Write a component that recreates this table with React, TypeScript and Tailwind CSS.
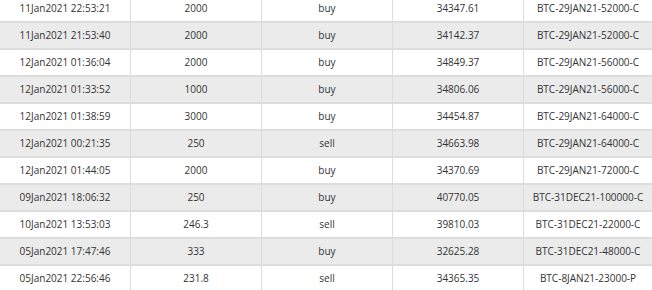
const ROWS = [
  ['11Jan2021 22:53:21', '2000', 'buy', '34347.61', 'BTC-29JAN21-52000-C'],
  ['11Jan2021 21:53:40', '2000', 'buy', '34142.37', 'BTC-29JAN21-52000-C'],
  ['12Jan2021 01:36:04', '2000', 'buy', '34849.37', 'BTC-29JAN21-56000-C'],
  ['12Jan2021 01:33:52', '1000', 'buy', '34806.06', 'BTC-29JAN21-56000-C'],
  ['12Jan2021 01:38:59', '3000', 'buy', '34454.87', 'BTC-29JAN21-64000-C'],
  ['12Jan2021 00:21:35', '250', 'sell', '34663.98', 'BTC-29JAN21-64000-C'],
  ['12Jan2021 01:44:05', '2000', 'buy', '34370.69', 'BTC-29JAN21-72000-C'],
  ['09Jan2021 18:06:32', '250', 'buy', '40770.05', 'BTC-31DEC21-100000-C'],
  ['10Jan2021 13:53:03', '246.3', 'sell', '39810.03', 'BTC-31DEC21-22000-C'],
  ['05Jan2021 17:47:46', '333', 'buy', '32625.28', 'BTC-31DEC21-48000-C'],
  ['05Jan2021 22:56:46', '231.8', 'sell', '34365.35', 'BTC-8JAN21-23000-P'],
];

export default function App() {
  return (
    <div className="w-[652px] h-[290px] overflow-hidden bg-white font-['Open_Sans',sans-serif] text-[10px] text-[#333]">
      <div className="-mt-[4px]">
        {ROWS.map((row, i) => (
          <div
            key={i}
            className={`grid grid-cols-[131px_131px_131px_131px_1fr] h-[27px] border-b-2 border-[#dddddd] ${
              i % 2 === 1 ? 'bg-[#ebebeb]' : 'bg-white'
            }`}
          >
            {row.map((cell, j) => (
              <div
                key={j}
                className={`flex items-center justify-center ${j < 4 ? 'border-r border-[#dddddd]' : ''}`}
              >
                {cell}
              </div>
            ))}
          </div>
        ))}
      </div>
    </div>
  );
}
